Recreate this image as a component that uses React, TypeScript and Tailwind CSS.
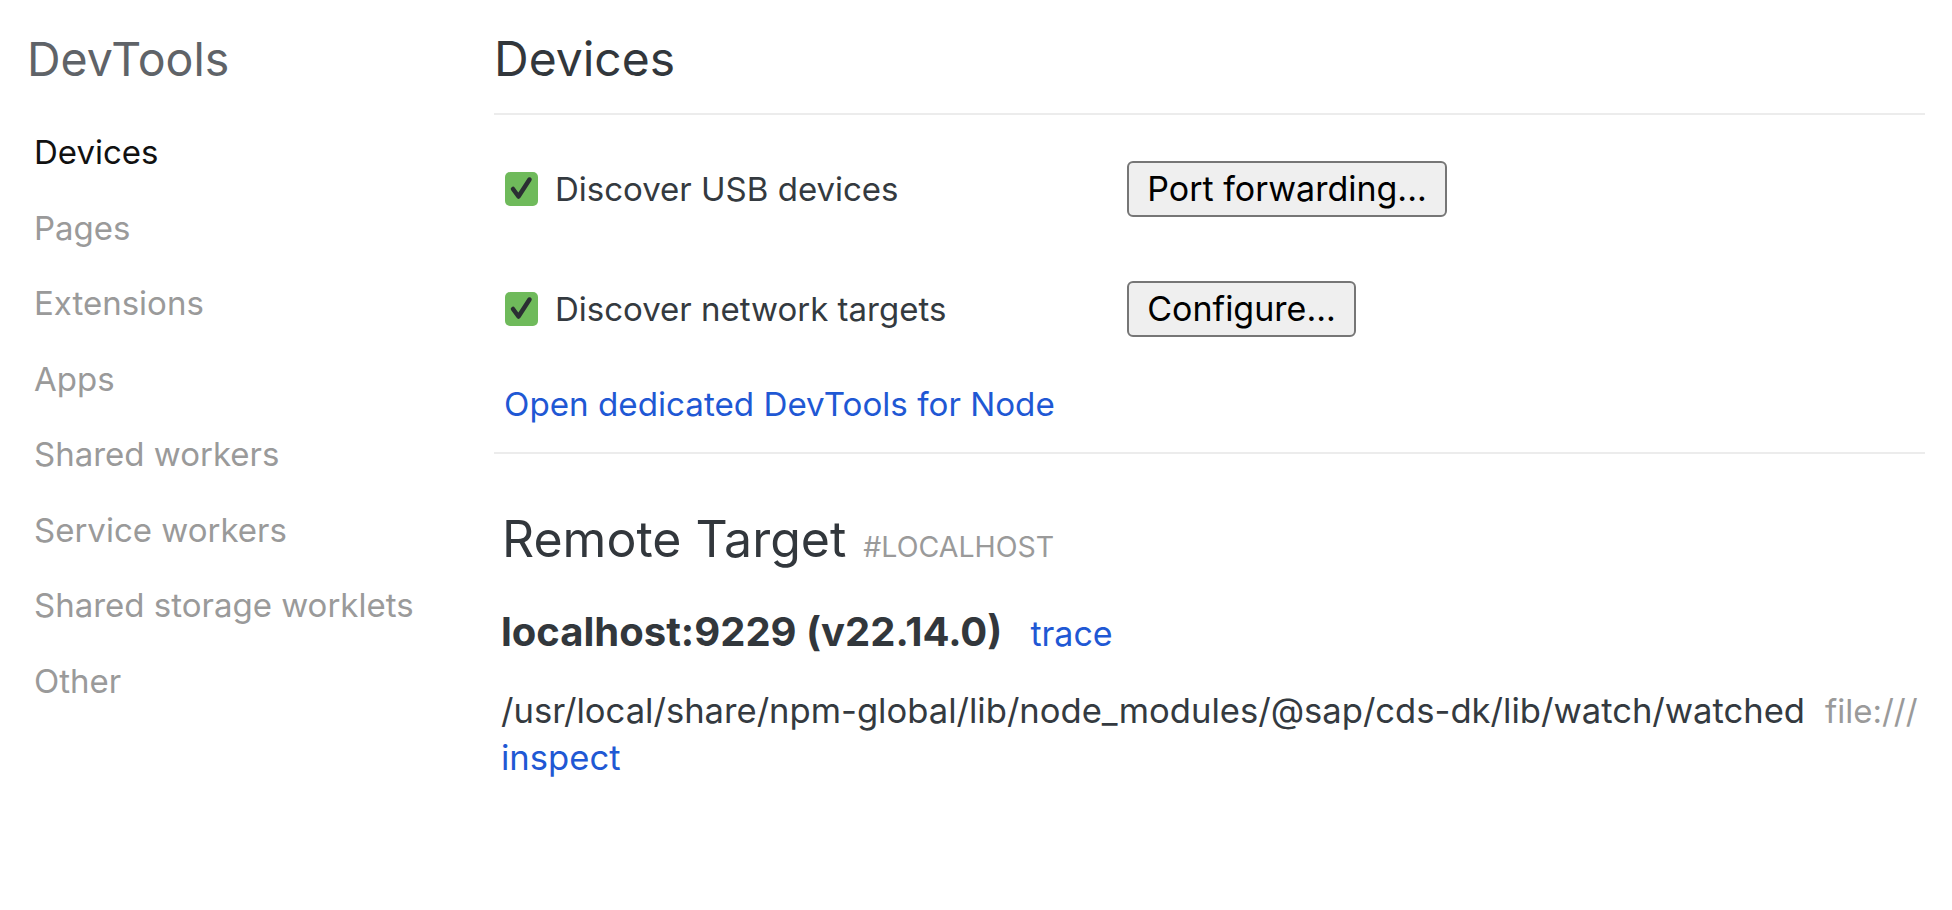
import React from 'react'

const navItems = [
  'Devices',
  'Pages',
  'Extensions',
  'Apps',
  'Shared workers',
  'Service workers',
  'Shared storage worklets',
  'Other',
]

function CheckBox() {
  return (
    <span className="flex h-[34px] w-[33px] shrink-0 items-center justify-center rounded-[5px] bg-[#6fba5b]">
      <svg width="33" height="34" viewBox="0 0 33 34">
        <path d="M8 17 L13.5 24.5 L24.5 7.5" fill="none" stroke="#2b2f33" strokeWidth="4.5" strokeLinecap="round" strokeLinejoin="round" />
      </svg>
    </span>
  )
}

function OptionRow({ label, button, buttonWidth }: { label: string; button: string; buttonWidth: string }) {
  return (
    <div className="flex h-[56px] items-center">
      <div className="flex w-[633px] shrink-0 items-center pl-[11px]">
        <CheckBox />
        <span className="ml-[17px] text-[33px] leading-none text-[#343a40]">{label}</span>
      </div>
      <button
        className={`${buttonWidth} h-[56px] rounded-[6px] border-2 border-[#767676] bg-[#efefef] text-[34px] leading-none text-black`}
      >
        {button}
      </button>
    </div>
  )
}

export default function App() {
  return (
    <div className="flex min-h-[910px] w-full bg-white font-['Inter','Liberation_Sans',sans-serif]">
      <aside className="w-[494px] shrink-0 pl-[27px]">
        <div className="h-[115px] pt-[36px]">
          <h1 className="text-[46.5px] leading-none font-normal text-[#5f6368]">DevTools</h1>
        </div>
        <nav className="pl-[7px]">
          {navItems.map((item, i) => (
            <div
              key={item}
              className={`h-[75.5px] text-[33px] leading-[75.5px] ${i === 0 ? 'text-[#111111]' : 'text-[#9a9a9a]'}`}
            >
              {item}
            </div>
          ))}
        </nav>
      </aside>

      <main className="w-[1431px] shrink-0">
        <header className="h-[115px] border-b-2 border-[#ececec] pt-[35px]">
          <h2 className="text-[48px] leading-none font-normal text-[#32373c]">Devices</h2>
        </header>

        <div className="mt-[46px]">
          <OptionRow label="Discover USB devices" button="Port forwarding..." buttonWidth="w-[320px]" />
        </div>
        <div className="mt-[64px]">
          <OptionRow label="Discover network targets" button="Configure..." buttonWidth="w-[229px]" />
        </div>

        <div className="mt-[44px] pl-[10px] text-[33.2px] leading-[46px]">
          <a className="text-[#1f58d4]">Open dedicated DevTools for Node</a>
        </div>

        <div className="mt-[25px] h-[2px] bg-[#ececec]" />

        <div className="mt-[60px] flex items-baseline gap-[17px] pl-[8px]">
          <h3 className="text-[50px] leading-none font-normal text-[#32373c]">Remote Target</h3>
          <span className="text-[28.5px] leading-none text-[#9a9a9a]">#LOCALHOST</span>
        </div>

        <div className="mt-[48px] flex items-baseline gap-[28px] pl-[7px]">
          <span className="text-[40px] leading-none font-bold text-[#32373c]">localhost:9229 (v22.14.0)</span>
          <a className="text-[34px] leading-none text-[#1f58d4]">trace</a>
        </div>

        <div className="mt-[35px] pl-[7px] text-[34.6px] leading-[46px]">
          <div className="flex items-baseline gap-[20px]">
            <span className="text-[#343a40]">/usr/local/share/npm-global/lib/node_modules/@sap/cds-dk/lib/watch/watched</span>
            <span className="text-[33px] text-[#9a9a9a]">file:///</span>
          </div>
          <a className="block text-[#1f58d4]">inspect</a>
        </div>
      </main>
    </div>
  )
}
